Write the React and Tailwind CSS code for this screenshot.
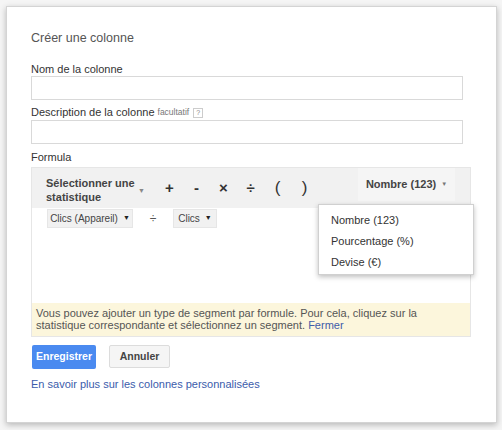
import React from 'react';

const ops = ['+', '-', '×', '÷', '(', ')'];

const App = () => {
  return (
    <div className="w-[502px] h-[430px] overflow-hidden bg-[#f5f5f5] pt-[6px] pl-[6px] font-['Liberation_Sans',Arial,sans-serif]">
      <div className="w-[491px] h-[417px] bg-white border border-[#d4d4d4] shadow-[0_2px_6px_rgba(0,0,0,0.25)] pl-[24px] pt-[24px]">
        {/* Title */}
        <h2 className="text-[12.5px] leading-[14px] text-[#555]">Créer une colonne</h2>

        {/* Nom */}
        <label className="block mt-[18px] text-[11px] leading-[13px] text-[#333]">Nom de la colonne</label>
        <input className="block w-[432px] h-[24px] border border-[#d9d9d9] outline-none" />

        {/* Description */}
        <label className="flex items-center mt-[6px] text-[11px] leading-[13px] text-[#333]">
          Description de la colonne
          <span className="ml-[3px] text-[8.5px] text-[#777]">facultatif</span>
          <span className="ml-[4px] w-[10px] h-[10px] border border-[#ccc] text-[7px] leading-[8px] text-[#888] text-center">?</span>
        </label>
        <input className="block mt-[1px] w-[432px] h-[24px] border border-[#d9d9d9] outline-none" />

        {/* Formula */}
        <div className="mt-[7px] text-[11px] leading-[13px] text-[#333]">Formula</div>
        <div className="relative mt-[3px] w-[440px] h-[170px] border border-[#e6e6e6] flex flex-col">
          {/* Toolbar */}
          <div className="flex h-[40px] bg-[#f1f1f1]">
            <div className="w-[124px] flex items-center pl-[14px] pt-[4px]">
              <div className="w-[92px] text-[11px] leading-[14px] font-bold text-[#444]">
                Sélectionner une statistique
              </div>
              <span className="mt-[2px] text-[7px] text-[#888]">▼</span>
            </div>
            {ops.map((op) => (
              <div
                key={op}
                className={`w-[27px] flex items-center justify-center text-[#333] ${
                  op === '(' || op === ')' ? 'text-[17px]' : 'text-[15px] font-bold'
                }`}
              >
                {op}
              </div>
            ))}
            <div className="flex-1 flex">
              <div className="ml-[40px] w-[97px] h-[33px] bg-[#f5f5f5] flex items-center justify-center text-[11px] font-bold text-[#444]">
                Nombre (123)
                <span className="ml-[5px] text-[6px] text-[#777]">▼</span>
              </div>
            </div>
          </div>

          {/* Chips row */}
          <div className="flex items-center pt-[1px]">
            <div className="ml-[15px] w-[86px] h-[19px] bg-[#f1f1f1] border border-[#e6e6e6] flex items-center justify-center text-[10px] text-[#444]">
              Clics (Appareil)
              <span className="ml-[5px] text-[7px] text-[#222]">▼</span>
            </div>
            <div className="w-[40px] text-center text-[12px] text-[#555]">÷</div>
            <div className="w-[44px] h-[19px] bg-[#f1f1f1] border border-[#e6e6e6] flex items-center justify-center text-[10px] text-[#444]">
              Clics
              <span className="ml-[5px] text-[7px] text-[#222]">▼</span>
            </div>
          </div>

          {/* Notice */}
          <div className="mt-auto h-[33px] bg-[#fcf6dc] pl-[4px] pt-[4px] text-[11px] leading-[12px] text-[#555]">
            Vous pouvez ajouter un type de segment par formule. Pour cela, cliquez sur la
            <br />
            statistique correspondante et sélectionnez un segment. <span className="text-[#3f5ca8]">Fermer</span>
          </div>

          {/* Dropdown menu */}
          <div className="absolute left-[286px] top-[36px] w-[156px] h-[71px] bg-white border border-[#d0d0d0] shadow-[0_2px_5px_rgba(0,0,0,0.25)] pt-[5px] text-[11px] text-[#333]">
            <div className="h-[21px] flex items-center pl-[12px]">Nombre (123)</div>
            <div className="h-[21px] flex items-center pl-[12px]">Pourcentage (%)</div>
            <div className="h-[21px] flex items-center pl-[12px]">Devise (€)</div>
          </div>
        </div>

        {/* Buttons */}
        <div className="flex items-start mt-[8px]">
          <button className="ml-[1px] w-[64px] h-[24px] rounded-[2px] bg-[#4a8af0] text-white text-[10.5px] font-bold">
            Enregistrer
          </button>
          <button className="ml-[13px] w-[61px] h-[23px] rounded-[2px] bg-[#f5f5f5] border border-[#dcdcdc] text-[#444] text-[10.5px] font-bold">
            Annuler
          </button>
        </div>

        <div className="mt-[8px] text-[11px] leading-[14px] text-[#3b5cab]">
          En savoir plus sur les colonnes personnalisées
        </div>
      </div>
    </div>
  );
};

export default App;
